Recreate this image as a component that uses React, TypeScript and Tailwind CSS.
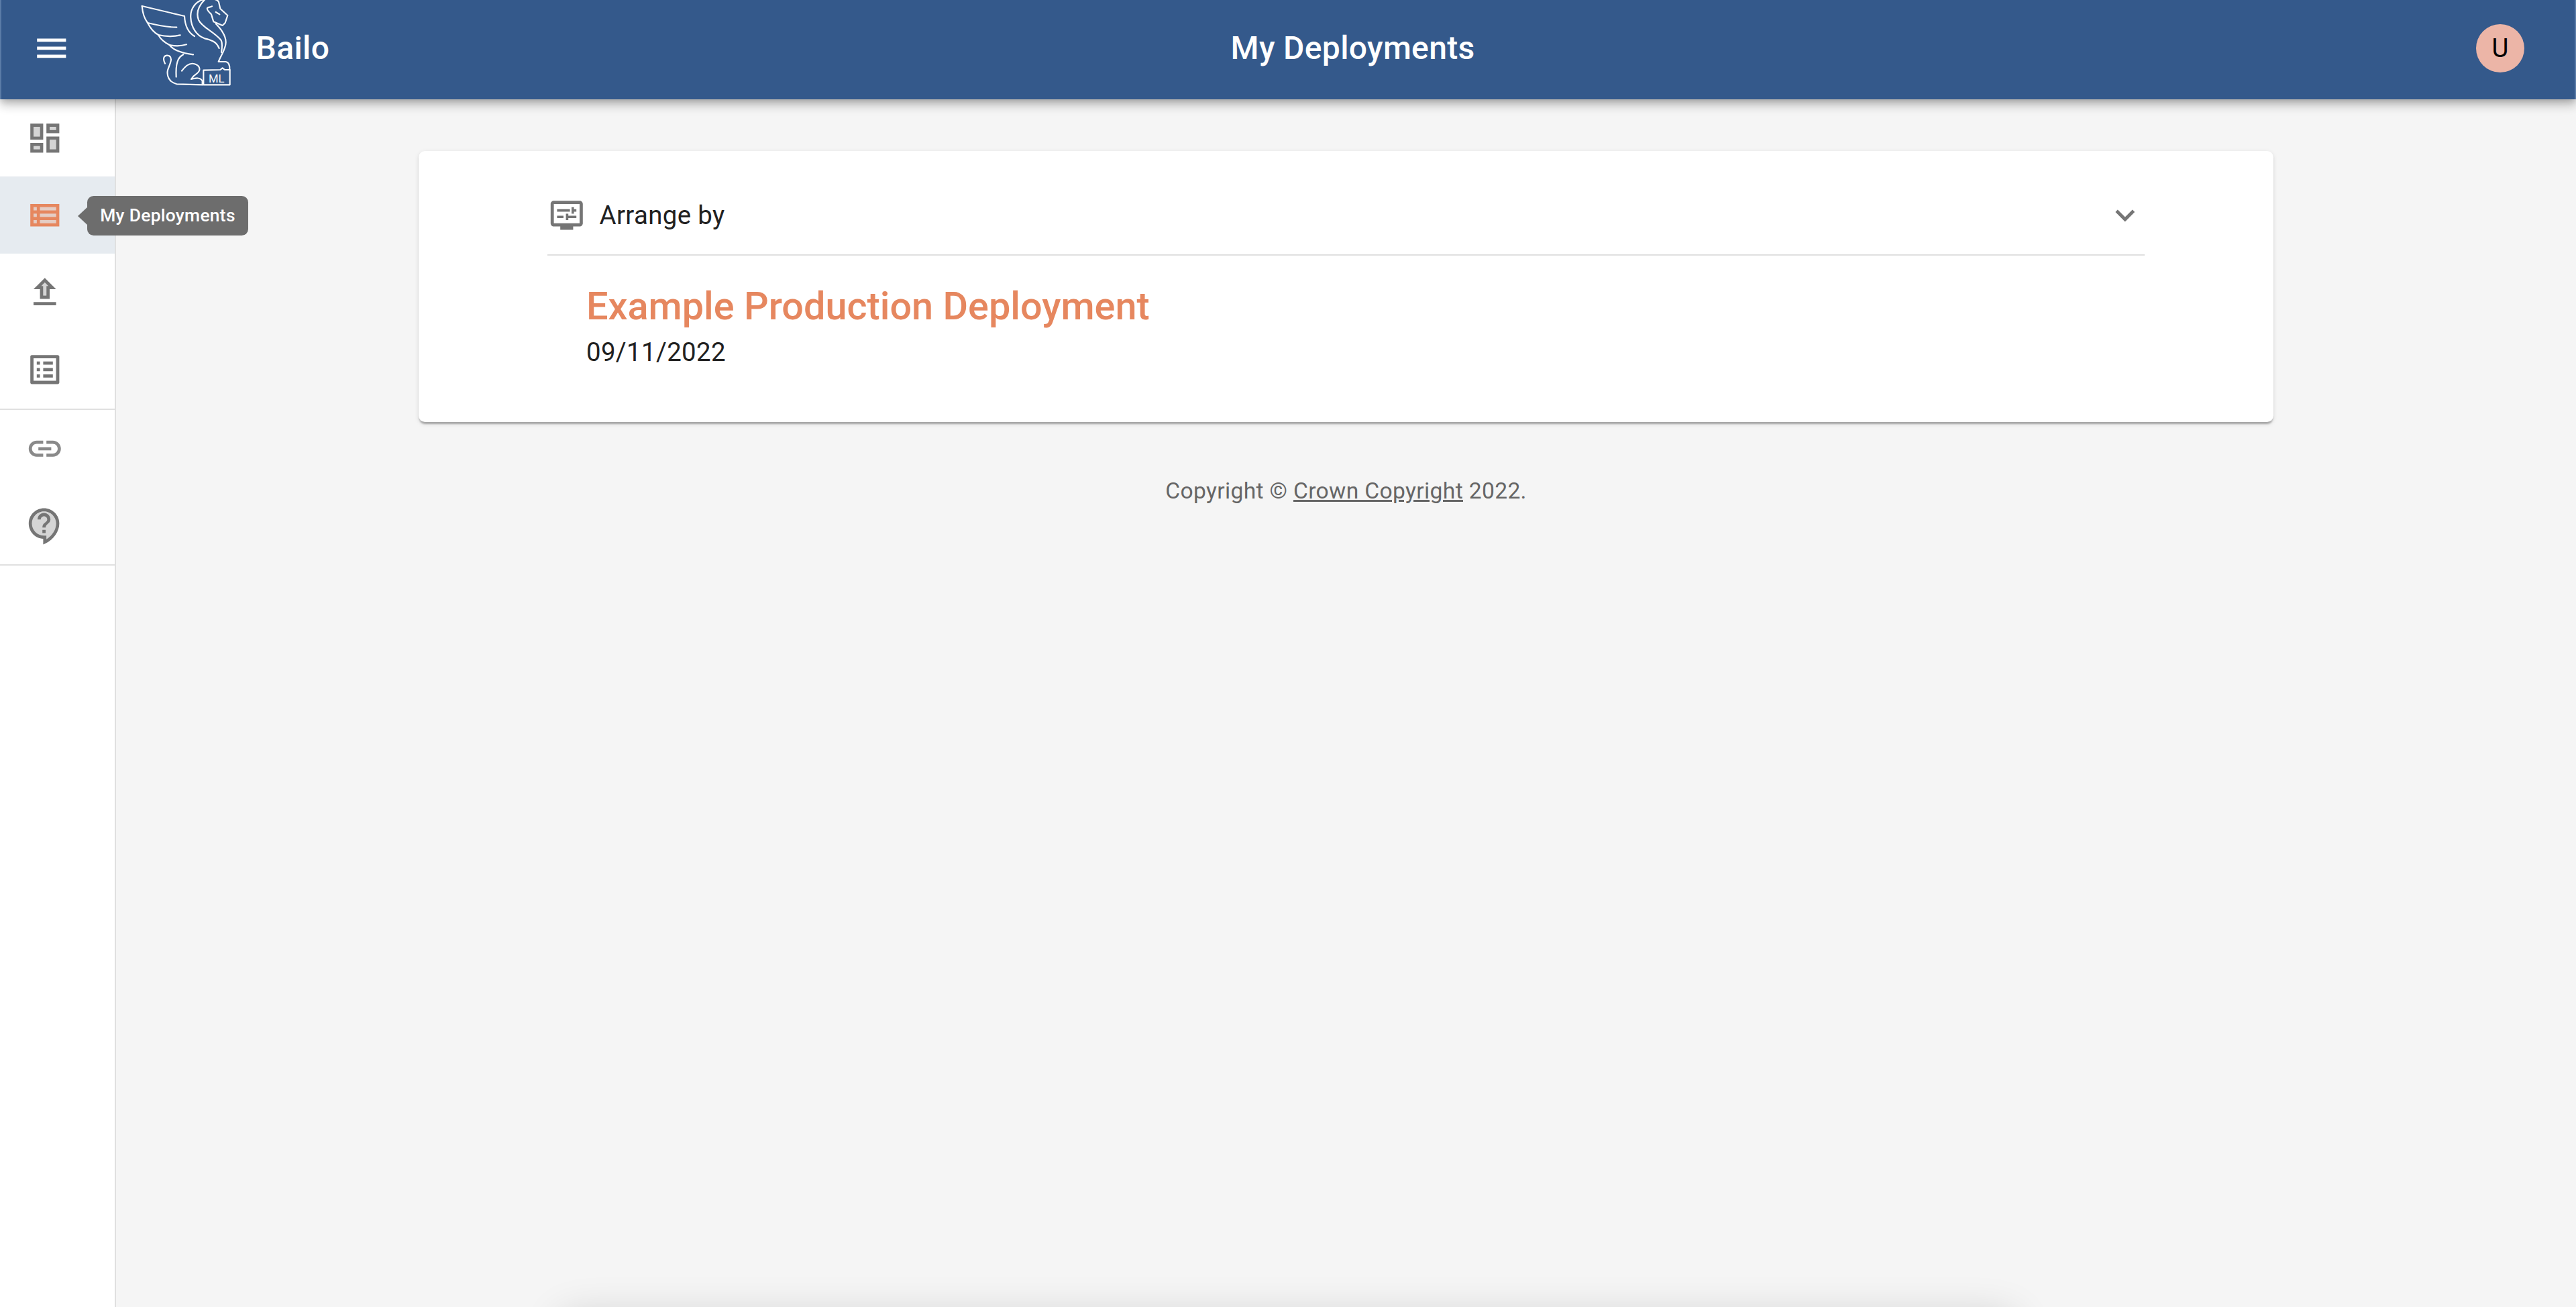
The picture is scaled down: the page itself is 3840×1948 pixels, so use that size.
const navTop = [
  {
    label: "Dashboard",
    tone: "M5 5h4v6H5zm10 8h4v6h-4zM5 17h4v2H5zM15 5h4v2h-4z",
    solid: "M3 13h8V3H3v10zm2-8h4v6H5V5zm8 16h8V11h-8v10zm2-8h4v6h-4v-6zM13 3v6h8V3h-8zm6 4h-4V5h4v2zM3 21h8v-6H3v6zm2-4h4v2H5v-2z",
  },
  {
    label: "My Deployments",
    active: true,
    tone: "M5 7h2v2H5zm0 4h2v2H5zm0 4h2v2H5zM9 7h10v2H9zm0 4h10v2H9zm0 4h10v2H9z",
    solid: "M3 5v14h18V5H3zm4 12H5v-2h2v2zm0-4H5v-2h2v2zm0-4H5V7h2v2zm12 8H9v-2h10v2zm0-4H9v-2h10v2zm0-4H9V7h10v2z",
  },
  {
    label: "Upload",
    tone: "M9.83 8H11v6h2V8h1.17L12 5.83z",
    solid: "m12 3-7 7h4v6h6v-6h4l-7-7zm1 5v6h-2V8H9.83L12 5.83 14.17 8H13zM5 18h14v2H5z",
  },
  {
    label: "Review",
    solid: "M19 5v14H5V5h14m1.1-2H3.9c-.5 0-.9.4-.9.9v16.2c0 .4.4.9.9.9h16.2c.4 0 .9-.5.9-.9V3.9c0-.5-.5-.9-.9-.9zM11 7h6v2h-6V7zm0 4h6v2h-6v-2zm0 4h6v2h-6zM7 7h2v2H7zm0 4h2v2H7zm0 4h2v2H7z",
  },
];

const navBottom = [
  {
    label: "Links",
    muted: true,
    solid: "M17 7h-4v2h4c1.65 0 3 1.35 3 3s-1.35 3-3 3h-4v2h4c2.76 0 5-2.24 5-5s-2.24-5-5-5zm-6 8H7c-1.65 0-3-1.35-3-3s1.35-3 3-3h4V7H7c-2.76 0-5 2.24-5 5s2.24 5 5 5h4v-2zm-3-4h8v2H8z",
  },
  {
    label: "Support",
    tone: "M11.5 3C7.36 3 4 6.36 4 10.5S7.36 18 11.5 18H13v2.3c3.64-2.3 6-6.08 6-9.8C19 6.36 15.64 3 11.5 3z",
    solid: "M11 23.59v-3.6c-5.01-.26-9-4.42-9-9.49C2 5.26 6.26 1 11.5 1S21 5.26 21 10.5c0 4.95-3.44 9.93-8.57 12.4L11 23.59zM11.5 3C7.36 3 4 6.36 4 10.5S7.36 18 11.5 18H13v2.3c3.64-2.3 6-6.08 6-9.8C19 6.36 15.64 3 11.5 3zm-1 11.5h2v2h-2zm2-1.5h-2c0-3.25 3-3 3-5 0-1.1-.9-2-2-2s-2 .9-2 2h-2c0-2.21 1.79-4 4-4s4 1.79 4 4c0 2.5-3 2.75-3 5z",
  },
];

type NavIconProps = { tone?: string; solid: string; className: string };

const NavIcon = ({ tone, solid, className }: NavIconProps) => (
  <svg viewBox="0 0 24 24" className={`w-[57.6px] h-[57.6px] fill-current ${className}`}>
    {tone && <path d={tone} opacity={0.3} />}
    <path d={solid} />
  </svg>
);

const BailoLogo = () => (
  <svg viewBox="0 0 540 420" className="w-[180px] h-[140px] shrink-0 mb-[8px]" fill="none" stroke="#f7f9fb" strokeWidth={6.5} strokeLinecap="round" strokeLinejoin="round">
    {/* wing */}
    <path d="M65 33 L255 78 C257 120 272 152 300 168" />
    <path d="M65 33 C68 70 78 92 90 108 C130 118 180 128 220 128" />
    <path d="M90 108 C102 132 120 152 138 162 C170 170 205 170 236 163" />
    <path d="M138 162 C150 185 170 198 188 207 C210 212 240 212 264 205" />
    <path d="M188 207 C202 226 240 243 294 250" />
    {/* mane */}
    <path d="M345 3 C302 10 280 50 283 85 C285 130 310 165 345 178 C375 185 398 192 410 222" />
    <path d="M345 5 C320 30 305 60 318 95 C335 130 385 145 418 185 C424 195 424 215 420 240" />
    {/* head */}
    <path d="M345 3 C370 -2 400 0 408 14 L415 45 L448 75 L437 108 L425 120 L385 103 L375 70 C362 58 354 48 357 42 C362 36 372 40 378 34" />
    <path d="M395 60 L412 70" />
    {/* chest and paw */}
    <path d="M395 112 C412 130 440 160 440 195 C440 225 420 250 407 282 L440 282 C455 285 458 300 457 318" />
    {/* tail and haunch */}
    <path d="M168 290 C155 265 165 250 185 255 C205 265 190 290 180 320 C175 345 185 372 220 382 L335 385" />
    <path d="M250 250 C225 262 215 290 218 350" />
    <path d="M243 323 C260 300 280 285 300 292 C325 300 330 320 310 335 C295 345 288 355 285 360 C305 355 325 350 335 368 L335 385" />
    {/* ML plinth */}
    <path d="M340 320 L415 318 L425 310 L435 318 L458 318 L458 385 L340 385 Z" />
    <text x="398" y="374" textAnchor="middle" fontFamily="Roboto, sans-serif" fontSize="50" fill="#f7f9fb" stroke="none">
      ML
    </text>
  </svg>
);

type NavEntry = { tone?: string; solid: string; active?: boolean; muted?: boolean };

const NavItem = ({ item }: { item: NavEntry }) => (
  <div className={`h-[115.2px] flex items-center pl-[38px] ${item.active ? "bg-[#e6ebf0]" : ""}`}>
    <NavIcon
      tone={item.tone}
      solid={item.solid}
      className={item.active ? "text-[#e6875f]" : item.muted ? "text-[#8a8a8a]" : "text-[#757575]"}
    />
  </div>
);

export default function App() {
  return (
    <div className="relative h-[1948px] overflow-hidden flex flex-col bg-[#f5f5f5] font-['Roboto',sans-serif]">
      <header className="relative z-20 h-[148px] shrink-0 flex items-center pb-[4px] pl-[46px] border-x-2 border-x-[#5a7ba6] bg-[#34598b] text-white shadow-[0_4.8px_9.6px_-2.4px_rgba(0,0,0,0.2),0_9.6px_12px_0_rgba(0,0,0,0.14),0_2.4px_24px_0_rgba(0,0,0,0.12)]">
        <svg viewBox="0 0 24 24" className="w-[57.6px] h-[57.6px] fill-current shrink-0">
          <path d="M3 18h18v-2H3v2zm0-5h18v-2H3v2zm0-7v2h18V6H3z" />
        </svg>
        <div className="ml-[84px] flex items-center">
          <BailoLogo />
          <span className="ml-[12px] text-[48px] leading-none font-medium tracking-[0.36px]">Bailo</span>
        </div>
        <div className="flex-1 pl-[4px] text-center text-[48px] leading-none font-medium tracking-[0.36px]">
          My Deployments
        </div>
        <div className="w-[300px] flex justify-end pr-[75px]">
          <div className="w-[72px] h-[72px] rounded-full bg-[#ecb5a7] text-black flex items-center justify-center text-[38.4px]">
            U
          </div>
        </div>
      </header>

      <div className="flex flex-1 min-h-0">
        <aside className="relative z-10 w-[173px] shrink-0 bg-white border-r-2 border-[#e0e0e0]">
          <nav className="border-b-2 border-[#e0e0e0]">
            {navTop.map((item) => (
              <NavItem key={item.label} item={item} />
            ))}
          </nav>
          <nav className="border-b-2 border-[#e0e0e0]">
            {navBottom.map((item) => (
              <NavItem key={item.label} item={item} />
            ))}
          </nav>
          <div className="absolute left-[116px] top-[144px] flex items-center z-30">
            <div className="w-0 h-0 border-y-[13px] border-y-transparent border-r-[14px] border-r-[#6d6d6d]" />
            <div className="w-[240px] h-[59px] rounded-[9.6px] bg-[#6d6d6d] text-white text-[26.4px] font-medium tracking-[0.3px] flex items-center justify-center whitespace-nowrap">
              My Deployments
            </div>
          </div>
        </aside>

        <main className="flex-1 min-w-0 pt-[77px] flex flex-col items-center">
          <section className="w-[2765px] px-[192px] pt-[38px] pb-[76px] bg-white rounded-[9.6px] shadow-[0_4.8px_2.4px_-2.4px_rgba(0,0,0,0.16),0_2.4px_2.4px_0_rgba(0,0,0,0.12),0_2.4px_7.2px_0_rgba(0,0,0,0.1)]">
            <div className="h-[118px] flex items-center border-b-2 border-[#e0e0e0]">
              <svg viewBox="0 0 24 24" className="w-[57.6px] h-[57.6px] fill-[#757575] shrink-0">
                <path d="M20 3H4c-1.11 0-2 .89-2 2v12c0 1.1.89 2 2 2h4v2h8v-2h4c1.1 0 2-.9 2-2V5c0-1.11-.9-2-2-2zm0 14H4V5h16v12z" />
                <path d="M6 8.25h8v1.5H6zm10.5 1.5H18v-1.5h-1.5V7H15v4h1.5zm-6.5 2.5H6v1.5h4zM11.5 15H13v-1.25h5v-1.5h-5V11h-1.5z" />
              </svg>
              <span className="ml-[20px] flex-1 text-[38.4px] tracking-[0.36px] text-[#212121]">Arrange by</span>
              <svg viewBox="0 0 24 24" className="w-[57.6px] h-[57.6px] fill-[#757575] shrink-0">
                <path d="M16.59 8.59 12 13.17 7.41 8.59 6 10l6 6 6-6z" />
              </svg>
            </div>
            <div className="pl-[58px] pt-[38px]">
              <h2 className="text-[57.6px] leading-[76.8px] font-medium text-[#e6875f]">Example Production Deployment</h2>
              <p className="text-[38.4px] leading-[57.6px] tracking-[0.36px] text-[#212121]">09/11/2022</p>
            </div>
          </section>
          <footer className="mt-[79px] text-[33.6px] leading-[48px] tracking-[0.36px] text-[#666666]">
            Copyright © <a className="underline">Crown Copyright</a> 2022.
          </footer>
        </main>
      </div>

      <div className="absolute left-[845px] top-[1970px] w-[2150px] h-[200px] rounded-[10px] shadow-[0_0_60px_10px_rgba(0,0,0,0.16)]" />
    </div>
  );
}
